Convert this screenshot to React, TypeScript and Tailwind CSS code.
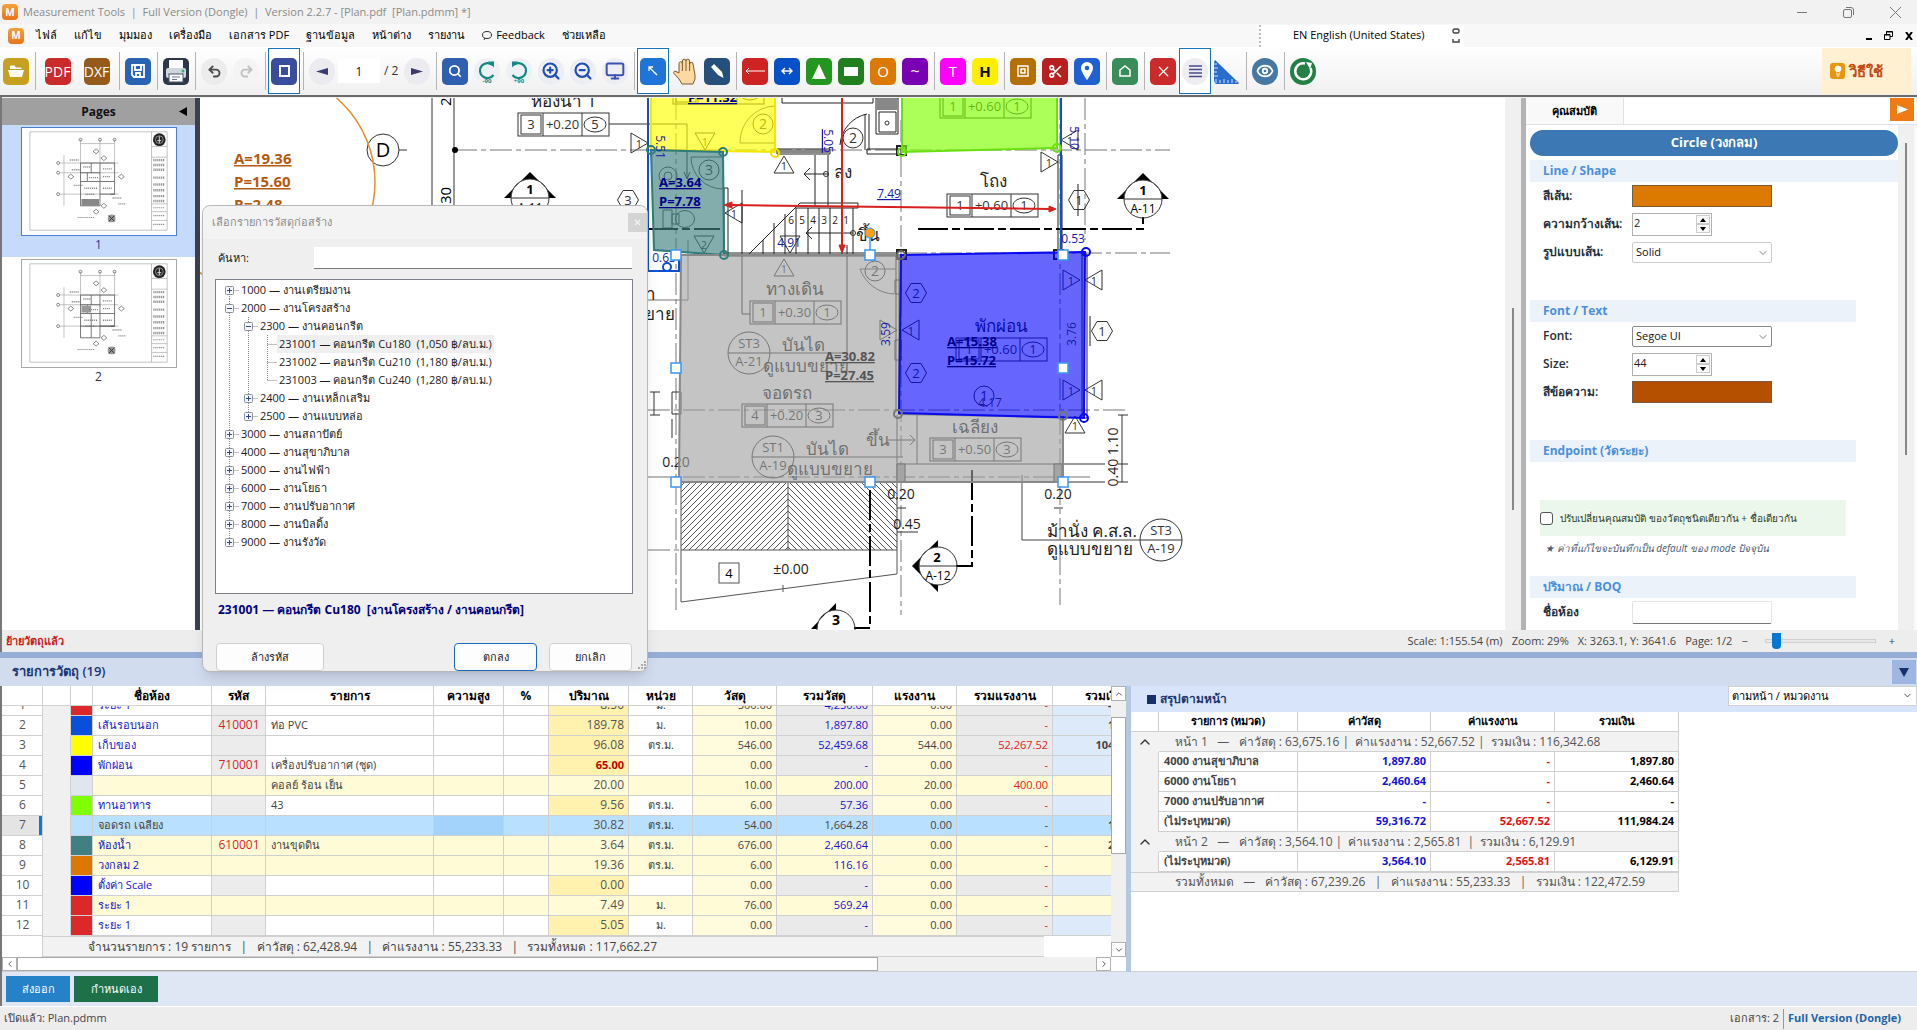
import React from "react";
import {
  Search,
  ZoomIn,
  ZoomOut,
  Monitor,
  Scissors,
  Eye,
  Lightbulb,
  ChevronDown,
  ChevronUp,
  ChevronLeft,
  ChevronRight,
  X,
  Undo2,
  Redo2,
} from "lucide-react";

/* ---------- toolbar ---------- */

function Sep() {
  return (
    <div className="flex w-[6px] shrink-0 justify-center">
      <div className="h-[38px] w-px bg-[#b4b4b4]" />
    </div>
  );
}

function Tool({
  label,
  tile = "",
  round = "",
  active = false,
  wide = false,
  children,
}: {
  label: string;
  tile?: string;
  round?: string;
  active?: boolean;
  wide?: boolean;
  children: React.ReactNode;
}) {
  return (
    <button
      type="button"
      aria-label={label}
      className={
        "flex h-[46px] shrink-0 items-center justify-center " +
        (wide ? "w-[39px] " : "w-8 ") +
        (active ? "border border-[#1a74b8] bg-white" : "")
      }
    >
      <span
        className={
          "flex h-[27px] w-[26px] items-center justify-center overflow-hidden " +
          (round ? "rounded-full " + round : "rounded-[5px] text-white " + tile)
        }
      >
        {children}
      </span>
    </button>
  );
}

function AppLogo() {
  return (
    <span className="flex size-4 items-center justify-center rounded-[4px] bg-gradient-to-b from-[#f6a03c] to-[#e8741a] text-[10px] font-bold text-white">
      M
    </span>
  );
}

function Rotate({ flip, text }: { flip?: boolean; text: string }) {
  return (
    <svg width="26" height="27" viewBox="0 0 26 27">
      <circle cx="13" cy="13" r="13" fill="#eef0f4" />
      <g transform={flip ? "translate(26 0) scale(-1 1)" : undefined} fill="none" stroke="#128a84" strokeWidth="2.2">
        <path d="M18.500 7 A7.500 7.500 0 1 0 19.500 17" />
        <path d="M14 3.500h6v6z" fill="#128a84" stroke="none" />
      </g>
      <text x="13" y="25" fontSize="6" fontWeight="bold" fill="#128a84" textAnchor="middle">
        {text}
      </text>
    </svg>
  );
}

function Toolbar() {
  return (
    <div className="flex h-[50px] shrink-0 items-center border-b-2 border-[#6b6b6b] bg-gradient-to-b from-white to-[#f0f0f0] pr-[6px]">
      <Tool label="Open" tile="bg-[#c8a020]">
        <svg width="16" height="14" viewBox="0 0 16 14" fill="#fff">
          <path d="M2 5V2.5A1 1 0 0 1 3 1.500h3.500l1.500 2h4.500a1 1 0 0 1 1 1V5z" />
          <path d="M0 6h16l-2 7H2z" />
        </svg>
      </Tool>
      <Sep />
      <Tool label="PDF" wide tile="bg-[#c92a2a]">
        <span className="text-[14px]">PDF</span>
      </Tool>
      <Tool label="DXF" wide tile="bg-[#955a1c]">
        <span className="text-[14px]">DXF</span>
      </Tool>
      <Sep />
      <Tool label="Save" tile="bg-[#2a62b4]">
        <svg width="14" height="14" viewBox="0 0 14 14" fill="none" stroke="#fff" strokeWidth="1.800">
          <path d="M1 1h12v12H3l-2-2z" />
          <path d="M4 1v5h6V1M5 13V9h4v4" />
        </svg>
      </Tool>
      <Sep />
      <Tool label="Print" tile="bg-[#2d3748]">
        <svg width="24" height="24" viewBox="0 0 24 24">
          <rect x="5" y="1" width="14" height="9" fill="#fff" />
          <rect x="2" y="9" width="20" height="10" rx="2" fill="#cfd6de" />
          <circle cx="19" cy="12" r="1.500" fill="#38b27a" />
          <rect x="5" y="15" width="14" height="8" fill="#fff" stroke="#4a5568" />
          <path d="M8 18h8M8 20.500h5" stroke="#6b7685" />
        </svg>
      </Tool>
      <Sep />
      <Tool label="Undo" round="bg-[#ececec] text-[#4a4a4a]">
        <Undo2 size={15} strokeWidth={3} />
      </Tool>
      <Tool label="Redo" round="bg-[#f4f4f4] text-[#c0c0c0]">
        <Redo2 size={15} strokeWidth={3} />
      </Tool>
      <Sep />
      <Tool label="Page view" active tile="bg-[#3a4d9c]">
        <span className="h-3 w-[11px] border-2 border-white" />
      </Tool>
      <Sep />
      <Tool label="Previous page" round="bg-[#ebebf0]">
        <svg width="12" height="7" viewBox="0 0 12 7">
          <path d="M0 3.500L12 0v7z" fill="#3b3b70" />
        </svg>
      </Tool>
      <input
        aria-label="Page number"
        defaultValue="1"
        className="h-6 w-[42px] shrink-0 bg-white text-center text-[12px] text-[#222]"
      />
      <span className="w-[21px] shrink-0 pl-1 text-[12px] text-[#333]">/ 2</span>
      <Tool label="Next page" round="bg-[#ebebf0]">
        <svg width="12" height="7" viewBox="0 0 12 7">
          <path d="M12 3.500L0 0v7z" fill="#3b3b70" />
        </svg>
      </Tool>
      <Sep />
      <Tool label="Find" tile="bg-[#2f5fae]">
        <Search size={14} strokeWidth={3} />
      </Tool>
      <Tool label="Rotate left">
        <Rotate text="-90" />
      </Tool>
      <Tool label="Rotate right">
        <Rotate text="+90" flip />
      </Tool>
      <Tool label="Zoom in" round="bg-[#eceef4] text-[#1f4fb4]">
        <ZoomIn size={20} strokeWidth={2.600} />
      </Tool>
      <Tool label="Zoom out" round="bg-[#eceef4] text-[#1f4fb4]">
        <ZoomOut size={20} strokeWidth={2.600} />
      </Tool>
      <Tool label="Fit to screen" round="bg-[#eceef4] text-[#3c50b4]">
        <Monitor size={20} strokeWidth={2.400} />
      </Tool>
      <Sep />
      <Tool label="Select" active tile="bg-[#1f74d8]">
        <svg width="10" height="10" viewBox="0 0 10 10" stroke="#fff" strokeWidth="1.300" fill="none">
          <path d="M1 5V1h4M1 1l8 8" />
        </svg>
      </Tool>
      <Tool label="Pan">
        <svg width="26" height="27" viewBox="0 0 26 27">
          <path
            d="M7 15V5.500a1.700 1.700 0 0 1 3.400 0V3a1.800 1.800 0 0 1 3.600 0v0a1.800 1.800 0 0 1 3.600 0v3a1.700 1.700 0 0 1 3.400 0L23 17v4l-2 5H10l-3-5-5-5.500c-1-1.500.500-3 2-2z"
            fill="#fbd9a0"
            stroke="#7b5a30"
          />
          <path d="M10.400 5v8M14 3v10M17.600 5v8" stroke="#7b5a30" />
        </svg>
      </Tool>
      <Tool label="Pen" tile="bg-[#26507c]">
        <svg width="13" height="14" viewBox="0 0 13 14" fill="#fff">
          <path d="M3 0L0 3l7 8 5.500 3L11 8z" />
        </svg>
      </Tool>
      <Sep />
      <Tool label="Distance" tile="bg-[#cf2222]">
        <svg width="20" height="8" viewBox="0 0 20 8" stroke="#fff" fill="none">
          <path d="M20 4H1M4 1L1 4l3 3" />
        </svg>
      </Tool>
      <Tool label="Dimension" tile="bg-[#0850c8]">
        <svg width="12" height="8" viewBox="0 0 12 8" stroke="#fff" strokeWidth="1.400" fill="none">
          <path d="M1 4h10M4 1L1 4l3 3M8 1l3 3-3 3" />
        </svg>
      </Tool>
      <Tool label="Polygon" tile="bg-[#22961e]">
        <svg width="14" height="15" viewBox="0 0 14 15" fill="#fff">
          <path d="M7 0l7 15H0z" />
        </svg>
      </Tool>
      <Tool label="Rectangle" tile="bg-[#20801e]">
        <span className="h-[9px] w-[14px] bg-white" />
      </Tool>
      <Tool label="Circle" tile="bg-[#dc7a00]">
        <span className="text-[15px]">O</span>
      </Tool>
      <Tool label="Curve" tile="bg-[#7a00b4]">
        <span className="text-[16px]">~</span>
      </Tool>
      <Sep />
      <Tool label="Text" tile="bg-[#ff00ff]">
        <span className="text-[15px]">T</span>
      </Tool>
      <Tool label="Highlight" tile="bg-[#ffee00]">
        <span className="text-[15px] font-bold text-black">H</span>
      </Tool>
      <Sep />
      <Tool label="Offset" tile="bg-[#b47000]">
        <svg width="12" height="12" viewBox="0 0 12 12" fill="none" stroke="#fff" strokeWidth="1.500">
          <path d="M1 1h10v10H1zM4 4h4v4H4z" />
        </svg>
      </Tool>
      <Tool label="Cut" tile="bg-[#b82020]">
        <Scissors size={15} strokeWidth={2.600} />
      </Tool>
      <Tool label="Pin" tile="bg-[#2060d0]">
        <svg width="12" height="18" viewBox="0 0 12 18">
          <path d="M6 0a6 6 0 0 1 6 6c0 4-6 12-6 12S0 10 0 6a6 6 0 0 1 6-6z" fill="#fff" />
          <circle cx="6" cy="6" r="2.300" fill="#2060d0" />
        </svg>
      </Tool>
      <Sep />
      <Tool label="Home" tile="bg-[#3a8c5a]">
        <svg width="12" height="12" viewBox="0 0 12 12" fill="none" stroke="#fff" strokeWidth="1.500">
          <path d="M1 11V5l5-4 5 4v6z" />
        </svg>
      </Tool>
      <Sep />
      <Tool label="Delete" tile="bg-[#cb2a2a]">
        <X size={17} strokeWidth={1.700} />
      </Tool>
      <Tool label="List" active round="bg-[#ededf2]">
        <svg width="13" height="13" viewBox="0 0 13 13" stroke="#4a4a8c" strokeWidth="1.500">
          <path d="M0 1h13M0 4.500h13M0 8h13M0 11.500h13" />
        </svg>
      </Tool>
      <Tool label="Ruler">
        <svg width="26" height="27" viewBox="0 0 26 27">
          <path d="M0 1L26 26H0z" fill="#2a6ccc" />
          <path d="M2 25v-4M6 25v-3M10 25v-4M14 25v-3M18 25v-4M22 25v-2M0 6h3M0 10h4M0 14h3M0 18h4" stroke="#cfe2fa" fill="none" />
        </svg>
      </Tool>
      <Sep />
      <Tool label="Show" round="bg-[#4678a4] text-white">
        <Eye size={18} strokeWidth={2.400} />
      </Tool>
      <Sep />
      <Tool label="Refresh" round="bg-[#258048]">
        <svg width="20" height="20" viewBox="0 0 20 20" fill="none" stroke="#fff" strokeWidth="2.500">
          <path d="M12 2.500A8 8 0 1 0 17.500 7" />
          <path d="M13 1l6 1-2 6z" fill="#fff" stroke="none" />
        </svg>
      </Tool>
      <button
        type="button"
        className="ml-auto flex h-[46px] w-[89px] shrink-0 items-center gap-1 bg-[#fff0d2] pl-2 text-[15px] font-bold text-[#c44a10]"
      >
        <span className="flex h-4 w-[15px] items-center justify-center rounded-[3px] bg-[#e8960c] text-white">
          <Lightbulb size={12} fill="#fff" />
        </span>
        วิธีใช้
      </button>
    </div>
  );
}

/* ---------- page thumbnails ---------- */

function Thumb({ second = false }: { second?: boolean }) {
  return (
    <svg viewBox="0 0 156 110" className="block h-[107px] w-[154px] bg-white">
      <g fill="none" stroke="#999" strokeWidth="0.600">
        <rect x="7" y="4" width="141" height="101" />
        <path d="M132 4v101M132 19h16M132 30h16M132 78h16M132 86h16M132 95h16" />
        <path d="M59 16h35M59 12v24M79 12v24M94 12v24M42 28v52M38 36h60M38 46h60M38 68h60" />
      </g>
      <g fill="none" stroke="#555" strokeWidth="0.800">
        <path d="M59 36H94V68H90M59 36V80H79V55H94M59 46H79M70 36V46M79 36V55M59 55H66V46M79 68H94M66 55H79" />
        {second && <path d="M59 68H94M70 55V80" />}
      </g>
      {second ? <rect x="60" y="47" width="10" height="7" fill="#999" /> : <rect x="60" y="73" width="18" height="7" fill="#888" />}
      <g stroke="#777" strokeWidth="1.500" strokeDasharray="1 1">
        <path d="M48 33h10M50 43h9M52 59h9M62 40h8M82 42h10M68 51h9M82 50h8M63 62h13M82 62h10M92 72h10M98 78h8M64 68h10" />
        <path d="M134 33h12M134 38h12M134 43h12M134 51h12M134 58h12M134 64h12M134 70h12M134 75h12" strokeWidth="2.500" />
        <path d="M56 92h18M134 82h11M134 90h11M134 99h11" strokeWidth="1.200" />
      </g>
      <g fill="none" stroke="#555" strokeWidth="0.700">
        <path d="M72 24l3-2.500 3 2.500-3 2.500zM80 31l3-2.500 3 2.500-3 2.500zM98 50l3-2.500 3 2.500-3 2.500zM46 50l3-2.500 3 2.500-3 2.500zM80 80l3-2.500 3 2.500-3 2.500zM72 86l3-2.500 3 2.500-3 2.500z" />
        <circle cx="59" cy="12" r="1.500" />
        <circle cx="79" cy="12" r="1.500" />
        <circle cx="94" cy="12" r="1.500" />
        <circle cx="36" cy="36" r="1.500" />
        <circle cx="36" cy="46" r="1.500" />
        <circle cx="36" cy="68" r="1.500" />
      </g>
      <circle cx="91" cy="93" r="4" fill="#999" />
      <path d="M88 90l6 6M94 90l-6 6" stroke="#333" />
      <circle cx="140" cy="12" r="6.500" fill="#222" />
      <circle cx="140" cy="12" r="4" fill="none" stroke="#bbb" strokeWidth="0.700" />
      <path d="M140 8.500v7M138 13h4" stroke="#ddd" />
    </svg>
  );
}

function PagesPanel() {
  return (
    <aside className="flex w-[193px] shrink-0 flex-col bg-white text-[12px]">
      <div className="relative flex h-[27px] items-center justify-center bg-[#a0a0a0] font-bold text-[#111]">
        Pages
        <button type="button" aria-label="Collapse" className="absolute right-2">
          <svg width="8" height="9" viewBox="0 0 8 9">
            <path d="M8 0v9L0 4.500z" fill="#000" />
          </svg>
        </button>
      </div>
      <button type="button" className="flex h-[132px] flex-col items-center bg-[#c6dafc] pt-[2px] text-[#1c3ca0]">
        <span className="border border-[#4a7fd0]">
          <Thumb />
        </span>
        1
      </button>
      <button type="button" className="flex h-[132px] flex-col items-center pt-[2px] text-[#333]">
        <span className="border border-[#a8a8a8]">
          <Thumb second />
        </span>
        2
      </button>
    </aside>
  );
}

/* ---------- drawing ---------- */

type P = { x: number; y: number };

function Tag({ x, y, a, v, b }: P & { a: string; v: string; b: string }) {
  return (
    <g fill="none" stroke="#333">
      <rect x={x} y={y} width="91" height="23" />
      <rect x={x + 3} y={y + 2} width="20" height="19" />
      <path d={`M${x + 25} ${y}v23M${x + 64} ${y}v23`} />
      <ellipse cx={x + 77} cy={y + 11.500} rx="11" ry="7.500" />
      <g fill="#333" stroke="none" fontSize="13" textAnchor="middle">
        <text x={x + 13} y={y + 16}>{a}</text>
        <text x={x + 44.500} y={y + 16}>{v}</text>
        <text x={x + 77} y={y + 16}>{b}</text>
      </g>
    </g>
  );
}

function Tri({ x, y, r = 0, n = "1" }: P & { r?: number; n?: string }) {
  return (
    <g>
      <path d="M0 -9L10 8H-10z" transform={`translate(${x} ${y}) rotate(${r})`} fill="none" stroke="#333" />
      {n && <text x={x} y={y + 5} fontSize="11" textAnchor="middle" fill="#333">{n}</text>}
    </g>
  );
}

function Hex({ x, y, n = "1" }: P & { n?: string }) {
  return (
    <g>
      <path d="M-10.500 0L-5 -9.500H5L10.500 0L5 9.500H-5z" transform={`translate(${x} ${y})`} fill="none" stroke="#333" />
      <text x={x} y={y + 5} fontSize="13" textAnchor="middle" fill="#333">{n}</text>
    </g>
  );
}

function Ring({ x, y, n, r = 10 }: P & { n: string; r?: number }) {
  return (
    <g>
      <circle cx={x} cy={y} r={r} fill="none" stroke="#333" />
      <text x={x} y={y + 5} fontSize="14" textAnchor="middle" fill="#333">{n}</text>
    </g>
  );
}

function Stamp({ x, y, a, b }: P & { a: string; b: string }) {
  return (
    <g>
      <circle cx={x} cy={y} r="21" fill="none" stroke="#333" />
      <path d={`M${x - 21} ${y}h42`} stroke="#333" />
      <g fontSize="13" textAnchor="middle" fill="#333">
        <text x={x} y={y - 5}>{a}</text>
        <text x={x} y={y + 13}>{b}</text>
      </g>
    </g>
  );
}

function Marker({ x, y, a, b }: P & { a: string; b: string }) {
  return (
    <g>
      <path d="M-26 0L0 -26L26 0H19A19 19 0 0 0 -19 0z" transform={`translate(${x} ${y})`} fill="#000" />
      <circle cx={x} cy={y} r="19" fill="none" stroke="#333" />
      <path d={`M${x - 19} ${y}h38`} stroke="#333" />
      <g textAnchor="middle">
        <text x={x} y={y - 4} fontSize="13" fontWeight="bold">{a}</text>
        <text x={x} y={y + 14} fontSize="12">{b}</text>
      </g>
    </g>
  );
}

function Label({ x, y, c = "#00008b", s = 15, lines, gap = 19 }: P & { c?: string; s?: number; lines: string[]; gap?: number }) {
  return (
    <g fontSize={s} fontWeight="bold" fill={c} textDecoration="underline">
      {lines.map((t, i) => (
        <text key={t} x={x} y={y + i * gap}>{t}</text>
      ))}
    </g>
  );
}

function Plan() {
  const handles: [number, number][] = [
    [676, 255], [870, 255], [1063, 255], [676, 368], [1063, 368], [676, 482], [870, 482], [1063, 482],
  ];
  const hatch = Array.from({ length: 30 }, (_, i) => i * 6);
  return (
    <svg
      viewBox="200 98 1305 532"
      preserveAspectRatio="xMinYMin slice"
      className="block size-full bg-white font-['Open_Sans','Noto_Sans',sans-serif]"
    >
      <defs>
        <clipPath id="hl"><rect x="681" y="483" width="107" height="67" /></clipPath>
        <clipPath id="hr"><rect x="788" y="483" width="109" height="67" /></clipPath>
      </defs>

      {/* grid axes */}
      <g stroke="#777" strokeDasharray="22 4 5 4" fill="none">
        <path d="M455 150H1170M905 253H1170M648 410H1125M648 477H1090" />
        <path d="M676 98V612M901 120V615M1060 98V605M1085 98V240" />
        <path d="M648 550H681" />
      </g>

      {/* left side of the sheet */}
      <g stroke="#333" fill="none">
        <path d="M432 98V205M454 98V205" />
        <circle cx="383" cy="150" r="16" />
        <path d="M399 150H407" />
        <path d="M609 124H687V178M684 172L687 179L690 172" />
      </g>
      <circle cx="455" cy="150" r="3" />
      <text x="383" y="157" fontSize="20" textAnchor="middle">D</text>
      <text transform="translate(451 208) rotate(-90)" fontSize="15">.30</text>
      <text transform="translate(451 106) rotate(-90)" fontSize="15">2</text>
      <text x="564" y="107" fontSize="17" textAnchor="middle" fill="#222">ห้องน้ำ 1</text>
      <Tag x={518} y={113} a="3" v="+0.20" b="5" />
      <Marker x={530} y={198} a="1" b="A-11" />
      <Hex x={628} y={200} n="3" />
      <circle cx="264" cy="182" r="111" fill="none" stroke="#e09030" strokeWidth="1.500" />
      <Label x={234} y={164} s={15} gap={23} c="#b45a10" lines={["A=19.36", "P=15.60", "R=2.48"]} />

      {/* walls */}
      <g stroke="#222" fill="none">
        <path d="M777 149H830V154H777zM867 149H901V154H867zM724 188H728V254H724zM724 253H897V256H724z" />
        <path d="M1058 155V252H1062V155zM1082 254V418H1087V254z" />
        <path d="M897 146h9v9h-9zM897 250h9v9h-9zM1054 250h9v9h-9z" strokeWidth="2" />
        <path d="M876 98h22v36h-22zM879 112h17v20h-17z" />
        <path d="M865 114V150M869 114V150M867 114A34 34 0 0 0 840 145" />
        <path d="M782 98V103H873V98" />
        <path d="M815 155V207M828 155V207M804 174H828M810 168L804 174L810 180" />
        <path d="M749 254L800 203H858V208H796M806 233H853M812 227L806 233L812 239" />
        <path d="M742 190V314H750M774 223V254M785 214V254M796 208V254M808 208V254M819 208V254M830 208V254M842 208V254M853 208V254M763 240V254" />
        <path d="M847 245V353M1078 184V216M1090 316V346" />
        <path d="M648 300H688V240" stroke="#777" />
        <path d="M896 255V411M899 255V411M895 280h6v14h-6zM895 340h6v20h-6z" />
      </g>
      <g fill="#888">
        <rect x="877" y="98" width="20" height="12" />
        <rect x="777" y="150" width="53" height="3" />
        <rect x="725" y="254" width="130" height="2" />
      </g>
      <circle cx="887" cy="123" r="2" fill="none" stroke="#333" />
      <circle cx="826" cy="174" r="2.500" fill="none" stroke="#333" />
      <circle cx="853" cy="233" r="2.500" fill="none" stroke="#333" />
      <g fontSize="10" textAnchor="middle" fill="#222">
        {["6", "5", "4", "3", "2", "1"].map((n, i) => (
          <text key={n} x={791 + i * 11} y={224}>{n}</text>
        ))}
      </g>

      {/* rooms */}
      <Ring x={763} y={124} n="2" />
      <Ring x={853} y={138} n="2" />
      <Ring x={709} y={170} n="3" />
      <Ring x={875} y={271} n="2" />
      <Ring x={984} y={396} n="1" />
      <path d="M740 143A36 36 0 0 1 775 106V143zM691 157A32 32 0 0 0 723 189M691 157H723M860 269H896M860 269A38 38 0 0 0 894 294" fill="none" stroke="#555" />
      <g fill="none" stroke="#444">
        <circle cx="668" cy="176" r="9" />
        <circle cx="668" cy="176" r="4" />
        <path d="M663 210h9v18h-9zM672 214h7v10h-7z" />
        <ellipse cx="685" cy="219" rx="9.500" ry="8.500" />
      </g>
      <Tri x={705} y={141} r={180} />
      <Tri x={784} y={165} />
      <Tri x={639} y={143} r={90} />
      <Tri x={1049} y={162} r={90} />
      <Tri x={1070} y={140} r={-90} />
      <Tri x={734} y={213} r={-90} />
      <Tri x={704} y={244} r={180} n="2" />
      <Tri x={790} y={244} r={180} n="" />
      <Tri x={784} y={268} />
      <Tri x={888} y={330} r={90} n="" />
      <Tri x={911} y={330} r={-90} />
      <Tri x={1071} y={280} r={90} />
      <Tri x={1094} y={280} r={-90} />
      <Tri x={1071} y={390} r={90} />
      <Tri x={1094} y={390} r={-90} />
      <Tri x={1075} y={425} />
      <Hex x={1079} y={200} />
      <Hex x={1102} y={331} />
      <Hex x={916} y={293} n="2" />
      <Hex x={916} y={373} n="2" />
      <Tag x={940} y={95} a="1" v="+0.60" b="1" />
      <Tag x={673} y={81} a="1" v="+0.60" b="1" />
      <Tag x={947} y={194} a="1" v="+0.60" b="1" />
      <Tag x={750} y={301} a="1" v="+0.30" b="1" />
      <Tag x={956} y={338} a="1" v="+0.60" b="1" />
      <Tag x={742} y={404} a="4" v="+0.20" b="3" />
      <Tag x={930} y={438} a="3" v="+0.50" b="3" />
      <Stamp x={749} y={353} a="ST3" b="A-21" />
      <Stamp x={773} y={457} a="ST1" b="A-19" />
      <Stamp x={1161} y={540} a="ST3" b="A-19" />
      <path d="M770 353H847M794 457H903M897 415V550M917 415V464M897 464H1063M680 482H1063M1022 475V540H1140" fill="none" stroke="#444" />
      <path d="M888 440H914M910 435L915 440L910 445" fill="none" stroke="#444" />
      <path d="M897 464h8v18h-8zM1054 464h8v18h-8z" fill="#aaa" stroke="#333" />
      <g fontSize="17" textAnchor="middle" fill="#222">
        <text x="843" y="178">ลง</text>
        <text x="993" y="187">โถง</text>
        <text x="868" y="241">ขึ้น</text>
        <text x="795" y="295">ทางเดิน</text>
        <text x="803" y="351">บันได</text>
        <text x="806" y="372">ดูแบบขยาย</text>
        <text x="1001" y="332">พักผ่อน</text>
        <text x="787" y="399">จอดรถ</text>
        <text x="827" y="455">บันได</text>
        <text x="830" y="475">ดูแบบขยาย</text>
        <text x="878" y="446">ขึ้น</text>
        <text x="975" y="433">เฉลียง</text>
        <text x="1092" y="537">ม้านั่ง ค.ส.ล.</text>
        <text x="1090" y="555">ดูแบบขยาย</text>
        <text x="646" y="300">ยา</text>
        <text x="654" y="320">ขยาย</text>
      </g>

      {/* driveway */}
      <g stroke="#555" fill="none">
        <g clipPath="url(#hl)">
          {hatch.map((i) => (
            <path key={i} d={`M${684 + i} 483l-67 67`} />
          ))}
        </g>
        <g clipPath="url(#hr)">
          {hatch.map((i) => (
            <path key={i} d={`M${724 + i} 483l67 67`} />
          ))}
        </g>
        <path d="M788 483V550M681 550H897M681 483V602L897 574V550M783 585V592" />
        <rect x="719" y="563" width="20" height="20" />
      </g>
      <text x="729" y="578" fontSize="13" textAnchor="middle">4</text>
      <g fontSize="14" textAnchor="middle" fill="#222">
        <text x="791" y="574">±0.00</text>
        <text x="676" y="467">0.20</text>
        <text x="901" y="499">0.20</text>
        <text x="907" y="529">0.45</text>
        <text x="1058" y="499">0.20</text>
        <text transform="translate(1118 457) rotate(-90)">0.40 1.10</text>
      </g>
      <path
        d="M1122 415V482M1118 415H1128M1118 464H1128M1118 482H1128M1063 464H1105M1063 482H1105M897 508H906M897 532H918M1054 508H1063M654 392V415M650 392H660M650 415H660M672 392h9v22h-9zM672 419V438"
        stroke="#333"
        fill="none"
      />

      {/* section cuts */}
      <g stroke="#000" strokeWidth="2" fill="none">
        <path d="M918 229H1143V217M972 470V566H956M870 490V628H854" strokeDasharray="30 4 8 4" />
        <path d="M648 229H720" strokeDasharray="30 4 8 4" />
      </g>
      <Marker x={1143} y={199} a="1" b="A-11" />
      <g>
        <path d="M912 566L938 540V547A19 19 0 0 0 938 585V592z" />
        <circle cx="938" cy="566" r="19" fill="none" stroke="#333" />
        <path d="M919 566H957" stroke="#333" />
        <text x="937" y="562" fontSize="13" fontWeight="bold" textAnchor="middle">2</text>
        <text x="938" y="580" fontSize="12" textAnchor="middle">A-12</text>
        <path d="M811 629L836 603V610A19 19 0 0 0 817 629z" />
        <circle cx="836" cy="629" r="19" fill="none" stroke="#333" />
        <text x="836" y="625" fontSize="14" fontWeight="bold" textAnchor="middle">3</text>
      </g>

      {/* measured areas */}
      <path d="M651 90V150L775 152V90z" fill="#ffff00" fillOpacity="0.650" stroke="#f5e800" strokeWidth="2" />
      <path d="M902 90V152L1057 148V90z" fill="#7fff00" fillOpacity="0.650" stroke="#6be010" strokeWidth="2" />
      <path d="M651 150L723 152L724 255L654 250z" fill="#408080" fillOpacity="0.650" stroke="#2f7c7c" strokeWidth="2" />
      <path d="M681 255H901L899 414L1063 417V482H679z" fill="#a0a0a0" fillOpacity="0.620" stroke="#888" strokeWidth="2" />
      <path d="M901 255L1085 252L1084 418L899 413z" fill="#0000ff" fillOpacity="0.600" stroke="#0a0af0" strokeWidth="2" />
      <path d="M648 98V271H679V255M1061 98V252" fill="none" stroke="#0a50d0" strokeWidth="2" />
      <g fill="none" strokeWidth="2">
        <circle cx="775" cy="153" r="4" stroke="#f0e000" />
        <circle cx="902" cy="152" r="4" stroke="#6be010" />
        <circle cx="1057" cy="148" r="4" stroke="#6be010" />
        <circle cx="651" cy="150" r="4" stroke="#2f7c7c" />
        <circle cx="723" cy="152" r="4" stroke="#2f7c7c" />
        <circle cx="724" cy="255" r="4" stroke="#2f7c7c" />
        <circle cx="901" cy="255" r="4" stroke="#666" />
        <circle cx="898" cy="414" r="4" stroke="#777" />
        <circle cx="1063" cy="416" r="4" stroke="#777" />
        <circle cx="1086" cy="252" r="4" stroke="#0a0af0" />
        <circle cx="1084" cy="418" r="4" stroke="#0a0af0" />
        <circle cx="667" cy="267" r="4" stroke="#0a50d0" />
      </g>
      <g stroke="#d82020" strokeWidth="2" fill="#d82020">
        <path d="M842 98V246M732 205L1049 209" />
        <path d="M839 245h6l-3 8zM732 202v6l-8-3zM1049 206v6l7-3z" strokeWidth="1" />
      </g>
      <Label x={688} y={102} lines={["P=11.32"]} s={13} />
      <Label x={659} y={187} lines={["A=3.64", "P=7.78"]} s={13} />
      <Label x={825} y={361} lines={["A=30.82", "P=27.45"]} s={13} c="#555" />
      <Label x={947} y={346} lines={["A=15.38", "P=15.72"]} s={13} />
      <g fontSize="12" fill="#1a1aa8" textAnchor="middle">
        <text x="889" y="198" textDecoration="underline">7.49</text>
        <text x="789" y="247">4.91</text>
        <text x="1073" y="243">0.53</text>
        <text x="990" y="407">4.17</text>
        <text x="664" y="262">0.63</text>
        <text transform="translate(824 141) rotate(90)" textDecoration="underline">5.05</text>
        <text transform="translate(656 147) rotate(90)">5.51</text>
        <text transform="translate(1070 138) rotate(90)">5.10</text>
        <text transform="translate(890 334) rotate(-90)">3.59</text>
        <text transform="translate(1076 334) rotate(-90)">3.76</text>
      </g>
      <path d="M870 238V250" stroke="#4a9ae8" strokeWidth="1.500" />
      <circle cx="870" cy="233" r="5" fill="#ffa010" stroke="#4a9ae8" />
      {handles.map(([x, y]) => (
        <rect key={`${x}-${y}`} x={x - 5} y={y - 5} width="10" height="10" fill="#fff" stroke="#3c96f0" strokeWidth="1.500" />
      ))}
    </svg>
  );
}

/* ---------- property panel ---------- */

function Section({ children, full = false }: { children: React.ReactNode; full?: boolean }) {
  return (
    <h3
      className={
        "flex h-[22px] items-center bg-[#ecf2fa] pl-[13px] text-[12px] font-bold text-[#4a90dc] " +
        (full ? "" : "mr-[42px]")
      }
    >
      {children}
    </h3>
  );
}

function Field({ id, label, children }: { id: string; label: string; children: React.ReactNode }) {
  return (
    <div className="flex h-7 items-center pl-[13px]">
      <label htmlFor={id} className="w-[89px] shrink-0 whitespace-nowrap text-[12px] font-semibold text-[#26303c]">
        {label}
      </label>
      {children}
    </div>
  );
}

function Spin({ id, value }: { id: string; value: string }) {
  return (
    <div className="flex h-[23px] w-20 items-center border border-[#b0b0b0] bg-white pr-px">
      <input id={id} defaultValue={value} className="h-full min-w-0 flex-1 pb-1 pl-px text-[11px] text-[#222]" />
      <div className="flex flex-col">
        <button type="button" aria-label="Increase" className="flex h-[9px] w-[14px] items-center justify-center border border-[#ccc] bg-[#fafafa]">
          <svg width="6" height="4" viewBox="0 0 6 4"><path d="M3 0l3 4H0z" /></svg>
        </button>
        <button type="button" aria-label="Decrease" className="flex h-[9px] w-[14px] items-center justify-center border border-[#ccc] bg-[#fafafa]">
          <svg width="6" height="4" viewBox="0 0 6 4"><path d="M3 4l3-4H0z" /></svg>
        </button>
      </div>
    </div>
  );
}

function Drop({ id, value, dark = false }: { id: string; value: string; dark?: boolean }) {
  return (
    <div className="relative">
      <select
        id={id}
        className={
          "block h-[21px] w-[140px] appearance-none rounded-[2px] border bg-white pl-[3px] text-[11px] text-[#111] " +
          (dark ? "border-[#888]" : "border-[#ccc]")
        }
      >
        <option>{value}</option>
      </select>
      <ChevronDown size={12} strokeWidth={1.500} className="pointer-events-none absolute right-[3px] top-[5px] text-[#555]" />
    </div>
  );
}

function Properties() {
  return (
    <aside className="flex w-[391px] shrink-0 flex-col overflow-hidden bg-white">
      <div className="flex h-[27px] shrink-0 items-stretch border-b border-[#e2e2e2]">
        <button type="button" className="w-[98px] border-r border-[#e2e2e2] bg-[#f9f9f9] text-[11px] font-semibold text-black">
          คุณสมบัติ
        </button>
        <button type="button" aria-label="Hide panel" className="ml-auto mr-[3px] flex h-[23px] w-6 items-center justify-center bg-[#f07a14]">
          <svg width="11" height="9" viewBox="0 0 11 9"><path d="M0 0l11 4.500L0 9z" fill="#fff" /></svg>
        </button>
      </div>
      <div className="flex min-h-0 flex-1">
        <div className="min-w-0 flex-1 overflow-hidden pl-1 pt-[5px]">
          <div className="flex h-[26px] items-center justify-center rounded-full bg-[#3c78b4] text-[13px] font-bold text-white">
            Circle (วงกลม)
          </div>
          <div className="mt-1 h-[140px]">
            <Section full>Line / Shape</Section>
            <Field id="lc" label="สีเส้น:">
              <button id="lc" type="button" className="h-[22px] w-[140px] border border-[#7a5a34] bg-[#dc7a00]" />
            </Field>
            <Field id="lw" label="ความกว้างเส้น:">
              <Spin id="lw" value="2" />
            </Field>
            <Field id="ls" label="รูปแบบเส้น:">
              <Drop id="ls" value="Solid" />
            </Field>
          </div>
          <div className="h-[140px]">
            <Section>Font / Text</Section>
            <Field id="ff" label="Font:">
              <Drop id="ff" value="Segoe UI" dark />
            </Field>
            <Field id="fs" label="Size:">
              <Spin id="fs" value="44" />
            </Field>
            <Field id="fc" label="สีข้อความ:">
              <button id="fc" type="button" className="h-[22px] w-[140px] border border-[#7a5a44] bg-[#b45000]" />
            </Field>
          </div>
          <div className="h-[136px]">
            <Section>Endpoint (วัดระยะ)</Section>
            <label className="ml-[10px] mr-[52px] mt-[38px] flex h-9 items-center gap-[7px] whitespace-nowrap bg-[#eaf7ea] text-[10px] text-[#2c3c2c]">
              <input type="checkbox" className="size-[13px] shrink-0 appearance-none rounded-[3px] border border-[#555] bg-white" />
              ปรับเปลี่ยนคุณสมบัติ ของวัตถุชนิดเดียวกัน + ชื่อเดียวกัน
            </label>
            <p className="whitespace-nowrap pl-[15px] text-[10px] italic leading-6 text-[#4a5a70]">
              ★ ค่าที่แก้ไขจะบันทึกเป็น default ของ mode ปัจจุบัน
            </p>
          </div>
          <Section>ปริมาณ / BOQ</Section>
          <Field id="room" label="ชื่อห้อง">
            <input id="room" className="h-[23px] w-[140px] rounded-[2px] border border-b-[#777] border-[#e4e4e4]" />
          </Field>
        </div>
        <div className="flex w-4 shrink-0 justify-center bg-[#f0f0f0] pt-[18px]">
          <div className="h-[312px] w-[2px] bg-[#888]" />
        </div>
        <div className="w-[3px] shrink-0 bg-[#fafafa]" />
      </div>
    </aside>
  );
}

/* ---------- material dialog ---------- */

type Node = { lvl: number; text: string; box?: "+" | "-"; sel?: boolean };

const tree: Node[] = [
  { lvl: 0, text: "1000 — งานเตรียมงาน", box: "+" },
  { lvl: 0, text: "2000 — งานโครงสร้าง", box: "-" },
  { lvl: 1, text: "2300 — งานคอนกรีต", box: "-" },
  { lvl: 2, text: "231001 — คอนกรีต Cu180  (1,050 ฿/ลบ.ม.)", sel: true },
  { lvl: 2, text: "231002 — คอนกรีต Cu210  (1,180 ฿/ลบ.ม.)" },
  { lvl: 2, text: "231003 — คอนกรีต Cu240  (1,280 ฿/ลบ.ม.)" },
  { lvl: 1, text: "2400 — งานเหล็กเสริม", box: "+" },
  { lvl: 1, text: "2500 — งานแบบหล่อ", box: "+" },
  { lvl: 0, text: "3000 — งานสถาปัตย์", box: "+" },
  { lvl: 0, text: "4000 — งานสุขาภิบาล", box: "+" },
  { lvl: 0, text: "5000 — งานไฟฟ้า", box: "+" },
  { lvl: 0, text: "6000 — งานโยธา", box: "+" },
  { lvl: 0, text: "7000 — งานปรับอากาศ", box: "+" },
  { lvl: 0, text: "8000 — งานบิลดิ้ง", box: "+" },
  { lvl: 0, text: "9000 — งานรังวัด", box: "+" },
];

function TreeRow({ n, first, end }: { n: Node; first: boolean; end: boolean }) {
  return (
    <li className="flex h-[18px] items-center">
      {Array.from({ length: n.lvl + 1 }, (_, i) => {
        const last = i === n.lvl;
        const from = first ? 9 : 0;
        const to = last && end ? 9 : 18;
        return (
          <svg key={i} width="19" height="18" viewBox="0 0 19 18" className="shrink-0" fill="none">
            {(last || i < 1 || n.lvl === 2) && <path d={`M9.500 ${from}V${to}`} stroke="#888" strokeDasharray="1 1" />}
            {last && <path d="M9.500 9.500H19" stroke="#888" strokeDasharray="1 1" />}
            {last && n.box && (
              <>
                <rect x="5.500" y="5.500" width="8" height="8" rx="1" fill="#f4f6fa" stroke="#8a8f9a" />
                <path d={n.box === "+" ? "M7 9.500h5M9.500 7v5" : "M7 9.500h5"} stroke="#2c4a8c" />
              </>
            )}
          </svg>
        );
      })}
      <span className={"whitespace-pre px-[2px] leading-[18px] " + (n.sel ? "bg-[#efefef]" : "")}>{n.text}</span>
    </li>
  );
}

function Dialog() {
  return (
    <section
      role="dialog"
      aria-label="เลือกรายการวัสดุก่อสร้าง"
      className="absolute left-[202px] top-[205px] z-10 flex w-[446px] flex-col rounded-lg border border-[#b8b8b8] bg-[#efefef] text-[11px] text-[#1a1a1a] shadow-lg"
    >
      <header className="flex h-[33px] items-center justify-between rounded-t-lg bg-[#f3f3f3] pl-[9px] text-[#8c8c8c]">
        <span>เลือกรายการวัสดุก่อสร้าง</span>
        <button type="button" aria-label="Close" className="flex h-[19px] w-[19px] items-center justify-center bg-[#d4d4d4] text-[#f4f4f4]">
          <X size={9} strokeWidth={3} />
        </button>
      </header>
      <div className="flex items-center pb-[10px] pl-[15px] pr-[15px] pt-2">
        <label htmlFor="q" className="w-24 shrink-0">ค้นหา:</label>
        <input id="q" className="h-[22px] min-w-0 flex-1 border-b border-[#777] bg-white" />
      </div>
      <ul className="ml-3 mr-[14px] h-[315px] border border-[#7c8088] bg-white pl-1 pt-px">
        {tree.map((n, i) => (
          <TreeRow key={n.text} n={n} first={i === 0} end={i === 5 || i === 7 || i === tree.length - 1} />
        ))}
      </ul>
      <p className="h-[49px] whitespace-pre pl-[15px] pt-[7px] text-[12px] font-bold text-[#00007c]">
        231001 — คอนกรีต Cu180  [งานโครงสร้าง / งานคอนกรีต]
      </p>
      <div className="flex h-7 gap-3 pl-[13px] pr-[15px]">
        <button type="button" className="w-[108px] rounded-[4px] border border-[#d0d0d0] bg-[#fdfdfd]">ล้างรหัส</button>
        <button type="button" className="ml-auto w-[83px] rounded-[4px] border border-[#1a6cb8] bg-[#fdfdfd]">ตกลง</button>
        <button type="button" className="w-[83px] rounded-[4px] border border-[#d0d0d0] bg-[#fdfdfd]">ยกเลิก</button>
      </div>
      <svg width="10" height="10" viewBox="0 0 10 10" className="absolute bottom-0 right-0" fill="#aaa">
        <path d="M7 0h2v2H7zM7 3h2v2H7zM7 6h2v2H7zM4 3h2v2H4zM4 6h2v2H4zM1 6h2v2H1z" />
      </svg>
    </section>
  );
}

/* ---------- object table ---------- */

type Row = {
  n: string; c: string; name: string; code?: string; item?: string; qty: string; unit?: string;
  mat: string; tmat: string; lab: string; tlab: string; sum?: string; y?: boolean; sel?: boolean; noteQty?: boolean;
};

const rows: Row[] = [
  { n: "1", c: "bg-[#dc2828]", name: "ระยะ 1", qty: "8.50", unit: "ม.", mat: "500.00", tmat: "4,250.00", lab: "0.00", tlab: "-", sum: "4,250.00" },
  { n: "2", c: "bg-[#0850dc]", name: "เส้นรอบนอก", code: "410001", item: "ท่อ PVC", qty: "189.78", unit: "ม.", mat: "10.00", tmat: "1,897.80", lab: "0.00", tlab: "-", sum: "1,897.80" },
  { n: "3", c: "bg-[#ffff00]", name: "เก็บของ", qty: "96.08", unit: "ตร.ม.", mat: "546.00", tmat: "52,459.68", lab: "544.00", tlab: "52,267.52", sum: "104,727.20" },
  { n: "4", c: "bg-[#0000ff]", name: "พักผ่อน", code: "710001", item: "เครื่องปรับอากาศ (ชุด)", qty: "65.00", noteQty: true, mat: "0.00", tmat: "-", lab: "0.00", tlab: "-" },
  { n: "5", c: "bg-[#e0e6ee]", name: "", item: "คอลย์ ร้อน เย็น", qty: "20.00", mat: "10.00", tmat: "200.00", lab: "20.00", tlab: "400.00", y: true },
  { n: "6", c: "bg-[#80ff00]", name: "ทานอาหาร", item: "43", qty: "9.56", unit: "ตร.ม.", mat: "6.00", tmat: "57.36", lab: "0.00", tlab: "-" },
  { n: "7", c: "bg-[#b9e0ff]", name: "จอดรถ เฉลียง", qty: "30.82", unit: "ตร.ม.", mat: "54.00", tmat: "1,664.28", lab: "0.00", tlab: "-", sum: "1,664.28", sel: true },
  { n: "8", c: "bg-[#408080]", name: "ห้องน้ำ", code: "610001", item: "งานขุดดิน", qty: "3.64", unit: "ตร.ม.", mat: "676.00", tmat: "2,460.64", lab: "0.00", tlab: "-", sum: "2,460.64", y: true },
  { n: "9", c: "bg-[#dc7800]", name: "วงกลม 2", qty: "19.36", unit: "ตร.ม.", mat: "6.00", tmat: "116.16", lab: "0.00", tlab: "-", y: true },
  { n: "10", c: "bg-[#0000ff]", name: "ตั้งค่า Scale", qty: "0.00", mat: "0.00", tmat: "-", lab: "0.00", tlab: "-" },
  { n: "11", c: "bg-[#dc2828]", name: "ระยะ 1", qty: "7.49", unit: "ม.", mat: "76.00", tmat: "569.24", lab: "0.00", tlab: "-", y: true },
  { n: "12", c: "bg-[#dc2828]", name: "ระยะ 1", qty: "5.05", unit: "ม.", mat: "0.00", tmat: "-", lab: "0.00", tlab: "-" },
];

function ItemRow({ r, cut }: { r: Row; cut?: boolean }) {
  const bg = (plain: string) => (r.sel ? "bg-[#b9e0ff] " : r.y ? "bg-[#fffbd6] " : plain + " ");
  const cell = (key: string, cls: string, text?: string) => (
    <td key={key} className={"overflow-hidden whitespace-nowrap border-b border-r border-[#d0d0d0] p-0 " + cls}>
      <div className={"flex flex-col justify-end overflow-hidden pl-[5px] pr-1 " + (cut ? "h-[9px]" : "h-[19px]")}>
        <span className="h-[19px] shrink-0 leading-[18px]">{text}</span>
      </div>
    </td>
  );
  return (
    <tr>
      {cell("n", "text-center text-[12px] text-[#555] " + (r.sel ? "bg-[#e4e4e4] shadow-[inset_-3px_0_0_#0f78d0]" : "bg-white"), r.n)}
      {cell("g", "border-b-[#f0f0f0] bg-[#f0f0f0]")}
      {cell("c", r.c)}
      {cell("name", bg("bg-white") + (r.sel ? "text-[#444]" : "text-[#1414c8]"), r.name)}
      {cell("code", bg("bg-[#ececec]") + "text-center text-[12px] text-[#d81e1e]", r.code)}
      {cell("item", bg("bg-white") + "text-[#444]", r.item)}
      {cell("h", r.sel ? "bg-[#a3d3fb]" : bg("bg-white"))}
      {cell("p", bg("bg-white"))}
      {cell("qty", bg("bg-[#fff2ae]") + (r.noteQty ? "text-right text-[11px] font-bold text-[#c00000]" : "text-right text-[12px] text-[#555]"), r.qty)}
      {cell("u", bg("bg-white") + "text-center text-[#444]", r.unit)}
      {cell("mat", bg("bg-[#fffbdc]") + "text-right text-[#444]", r.mat)}
      {cell("tm", bg("bg-[#eaeaea]") + "text-right " + (r.sel ? "text-[#444]" : "text-[#1414c8]"), r.tmat)}
      {cell("lab", bg("bg-[#fffbdc]") + "text-right text-[#444]", r.lab)}
      {cell("tl", bg("bg-[#eaeaea]") + "text-right " + (r.sel ? "text-[#444]" : "text-[#e01e1e]"), r.tlab)}
      {cell("s", bg("bg-[#dceafa]") + "text-right font-bold text-[#444]", r.sum)}
    </tr>
  );
}

const heads = ["", "", "", "ชื่อห้อง", "รหัส", "รายการ", "ความสูง", "%", "ปริมาณ", "หน่วย", "วัสดุ", "รวมวัสดุ", "แรงงาน", "รวมแรงงาน", "รวมเงิน"];
const headWidths = [
  "w-[41px]", "w-[28px]", "w-[22px]", "w-[119px]", "w-[54px]", "w-[168px]", "w-[70px]", "w-[45px]",
  "w-[80px]", "w-[64px]", "w-[84px]", "w-[96px]", "w-[84px]", "w-[96px]", "w-[104px]",
];

function ObjectGrid() {
  return (
    <div className="flex min-w-0 flex-[1124] flex-col border-b border-[#d0d0d0] bg-white">
      <div className="flex">
        <div className="min-w-0 flex-1 overflow-hidden">
          <table className="w-[1155px] table-fixed border-separate border-spacing-0 text-[11px]">
            <thead>
              <tr>
                {heads.map((h, i) => (
                  <th key={i} className={"h-5 whitespace-nowrap border-b border-r border-[#d0d0d0] bg-white p-0 text-[12px] font-bold leading-4 text-black " + headWidths[i]}>
                    {h}
                  </th>
                ))}
              </tr>
            </thead>
            <tbody>
              {rows.map((r, i) => (
                <ItemRow key={r.n} r={r} cut={i === 0} />
              ))}
            </tbody>
          </table>
          <div className="flex h-[21px] items-stretch text-[12px] text-[#444]">
            <div className="w-[41px] shrink-0 border-r border-[#d0d0d0]" />
            <div className="mr-[67px] flex flex-1 items-center whitespace-pre border-b border-t border-[#d0d0d0] bg-[#f2f2f2] pl-[45px]">
              จำนวนรายการ : 19 รายการ   |   ค่าวัสดุ : 62,428.94   |   ค่าแรงงาน : 55,233.33   |   รวมทั้งหมด : 117,662.27
            </div>
          </div>
        </div>
        <div className="flex w-[15px] shrink-0 flex-col bg-[#f0f0f0]">
          <button type="button" aria-label="Scroll up" className="flex h-[15px] items-center justify-center border border-[#b0b0b0] bg-white">
            <ChevronUp size={10} strokeWidth={1.500} />
          </button>
          <div className="mt-4 h-[137px] border border-[#a8a8a8] bg-white" />
          <button type="button" aria-label="Scroll down" className="mt-auto flex h-[15px] items-center justify-center border border-[#b0b0b0] bg-white">
            <ChevronDown size={10} strokeWidth={1.500} />
          </button>
        </div>
      </div>
      <div className="mr-[15px] flex h-[14px] bg-[#f0f0f0]">
        <button type="button" aria-label="Scroll left" className="flex w-[15px] items-center justify-center border border-[#b0b0b0] bg-white">
          <ChevronLeft size={10} strokeWidth={1.500} />
        </button>
        <div className="w-[861px] border border-[#a8a8a8] bg-white" />
        <button type="button" aria-label="Scroll right" className="ml-auto flex w-[15px] items-center justify-center border border-[#b0b0b0] bg-white">
          <ChevronRight size={10} strokeWidth={1.500} />
        </button>
      </div>
    </div>
  );
}

/* ---------- summary table ---------- */

function SumRow({ a, b, c, d }: { a: string; b: string; c: string; d: string }) {
  const td = "h-5 whitespace-nowrap border-b border-r border-[#d0d0d0] bg-white px-1 py-0 text-right";
  return (
    <tr className="font-bold">
      <td className="border-r border-[#d0d0d0] bg-[#f2f2f2]" />
      <td className="h-5 whitespace-nowrap border-b border-r border-[#d0d0d0] bg-white px-[5px] py-0 text-[#444]">{a}</td>
      <td className={td + " text-[#1414d8]"}>{b}</td>
      <td className={td + " text-[#dc1414]"}>{c}</td>
      <td className={td + " text-black"}>{d}</td>
    </tr>
  );
}

function GroupRow({ text, icon = true }: { text: string; icon?: boolean }) {
  return (
    <tr>
      <td className={"h-5 bg-[#f2f2f2] p-0 " + (icon ? "" : "border-b border-t border-[#d0d0d0]")}>
        {icon && <ChevronUp size={16} strokeWidth={2} className="mx-auto text-[#333]" />}
      </td>
      <td
        colSpan={4}
        className={
          "h-5 whitespace-pre border-b border-r border-[#d0d0d0] bg-[#f2f2f2] py-0 pl-4 pr-0 text-[12px] text-[#555] " +
          (icon ? "" : "border-t")
        }
      >
        {text}
      </td>
    </tr>
  );
}

function Summary() {
  const th = "h-5 border-b border-r border-[#d0d0d0] p-0 font-bold text-black ";
  return (
    <div className="flex min-w-0 flex-[786] flex-col border-b border-[#d0d0d0] bg-white">
      <div className="flex h-[26px] shrink-0 items-center justify-between bg-[#d8e4fa] pl-4">
        <h3 className="flex items-center gap-1 text-[12px] font-semibold text-[#1c3570]">
          <span className="size-[9px] bg-[#17306a]" />
          สรุปตามหน้า
        </h3>
        <div className="relative mb-[6px]">
          <select aria-label="จัดกลุ่ม" className="block h-5 w-[189px] appearance-none border border-[#d0d0d0] bg-white pl-[3px] text-[11px] text-black">
            <option>ตามหน้า / หมวดงาน</option>
          </select>
          <ChevronDown size={11} strokeWidth={1.500} className="pointer-events-none absolute right-1 top-1" />
        </div>
      </div>
      <table className="w-[548px] table-fixed border-separate border-spacing-0 text-[11px]">
        <thead>
          <tr>
            <th className={th + "w-7"} />
            <th className={th + "w-[139px]"}>รายการ (หมวด)</th>
            <th className={th + "w-[133px]"}>ค่าวัสดุ</th>
            <th className={th + "w-[124px]"}>ค่าแรงงาน</th>
            <th className={th + "w-[124px]"}>รวมเงิน</th>
          </tr>
        </thead>
        <tbody>
          <GroupRow text="หน้า 1   —   ค่าวัสดุ : 63,675.16 |  ค่าแรงงาน : 52,667.52 |  รวมเงิน : 116,342.68" />
          <SumRow a="4000 งานสุขาภิบาล" b="1,897.80" c="-" d="1,897.80" />
          <SumRow a="6000 งานโยธา" b="2,460.64" c="-" d="2,460.64" />
          <SumRow a="7000 งานปรับอากาศ" b="-" c="-" d="-" />
          <SumRow a="(ไม่ระบุหมวด)" b="59,316.72" c="52,667.52" d="111,984.24" />
          <GroupRow text="หน้า 2   —   ค่าวัสดุ : 3,564.10 |  ค่าแรงงาน : 2,565.81  |  รวมเงิน : 6,129.91" />
          <SumRow a="(ไม่ระบุหมวด)" b="3,564.10" c="2,565.81" d="6,129.91" />
          <GroupRow icon={false} text="รวมทั้งหมด   —   ค่าวัสดุ : 67,239.26   |   ค่าแรงงาน : 55,233.33   |   รวมเงิน : 122,472.59" />
        </tbody>
      </table>
    </div>
  );
}

/* ---------- page ---------- */

const menus = ["ไฟล์", "แก้ไข", "มุมมอง", "เครื่องมือ", "เอกสาร PDF", "ฐานข้อมูล", "หน้าต่าง", "รายงาน", "Feedback", "ช่วยเหลือ"];

export default function App() {
  return (
    <div className="relative flex h-screen flex-col overflow-hidden bg-[#f0f0f0] font-['Open_Sans','Noto_Sans',sans-serif] text-[11px] leading-normal">
      <header className="flex h-6 shrink-0 items-center gap-[5px] bg-[#f2f2f2] pl-[2px] text-[#8a8a8a]">
        <AppLogo />
        <h1 className="whitespace-pre">Measurement Tools  |  Full Version (Dongle)  |  Version 2.2.7 - [Plan.pdf  [Plan.pdmm] *]</h1>
        <div className="ml-auto flex items-center gap-9 pr-4">
          <button type="button" aria-label="Minimize" className="h-px w-[10px] bg-[#777]" />
          <button type="button" aria-label="Restore">
            <svg width="11" height="11" viewBox="0 0 11 11" fill="none" stroke="#777">
              <rect x="0.500" y="2.500" width="8" height="8" rx="1.500" />
              <path d="M3 0.500h5a2.500 2.500 0 0 1 2.500 2.500v5" />
            </svg>
          </button>
          <button type="button" aria-label="Close">
            <svg width="11" height="11" viewBox="0 0 11 11" stroke="#777"><path d="M0 0l11 11M11 0L0 11" /></svg>
          </button>
        </div>
      </header>

      <nav className="flex h-[23px] shrink-0 items-center bg-[#f8f8f8] pl-2 text-black">
        <AppLogo />
        <div className="flex gap-[17px] whitespace-nowrap pl-3">
          {menus.map((m) => (
            <button key={m} type="button" className="flex items-center gap-1">
              {m === "Feedback" && (
                <svg width="10" height="9" viewBox="0 0 10 9" fill="none" stroke="#333">
                  <ellipse cx="5" cy="4" rx="4.500" ry="3.500" />
                  <path d="M3 7L2 9" />
                </svg>
              )}
              {m}
            </button>
          ))}
        </div>
        <div className="ml-auto mr-[402px] flex h-[22px] w-[205px] items-center border-l-2 border-dotted border-[#bbb] bg-white pl-8">
          <span className="whitespace-nowrap">EN English (United States)</span>
          <svg width="8" height="16" viewBox="0 0 8 16" className="ml-auto mr-1" fill="none" stroke="#444" strokeWidth="1.400">
            <rect x="1" y="1" width="6" height="4" rx="1.500" />
            <path d="M1 11v3h6v-3" />
          </svg>
        </div>
        <div className="flex items-end gap-3 pr-1">
          <button type="button" aria-label="Minimize document" className="h-[2px] w-[6px] bg-black" />
          <button type="button" aria-label="Restore document">
            <svg width="9" height="9" viewBox="0 0 9 9" fill="none" stroke="#000">
              <path d="M2.500 3V.500h6v5H6M2.500 1h6" />
              <path d="M.500 3.500h5.500v5H.500zM.500 4h5.500" />
            </svg>
          </button>
          <button type="button" aria-label="Close document">
            <svg width="8" height="8" viewBox="0 0 8 8" stroke="#000" strokeWidth="2"><path d="M1 0l6 8M7 0L1 8" /></svg>
          </button>
        </div>
      </nav>

      <Toolbar />

      <main className="flex min-h-0 flex-1 border-l-2 border-[#777] pt-px">
        <PagesPanel />
        <div className="w-[5px] shrink-0 bg-[#3a4050]" />
        <div className="min-w-0 flex-1 overflow-hidden">
          <Plan />
        </div>
        <div className="flex w-4 shrink-0 justify-center bg-[#f0f0f0] pt-[210px]">
          <div className="h-[202px] w-[2px] bg-[#888]" />
        </div>
        <div className="w-[5px] shrink-0 bg-[#b3b3b6]" />
        <Properties />
      </main>

      <div className="flex h-[22px] shrink-0 items-center border-l-2 border-[#777] bg-[#ededed] pl-1 text-[#444]">
        <span className="font-semibold text-[#c81e1e]">ย้ายวัตถุแล้ว</span>
        <div className="ml-auto flex items-center gap-[9px] whitespace-nowrap pr-[22px]">
          <span>Scale: 1:155.54 (m)</span>
          <span>Zoom: 29%</span>
          <span>X: 3263.1, Y: 3641.6</span>
          <span>Page: 1/2</span>
          <button type="button" aria-label="Zoom out" className="mr-2">−</button>
          <input
            type="range"
            aria-label="Zoom"
            defaultValue="6"
            className="h-4 w-[111px] appearance-none bg-transparent [&::-webkit-slider-runnable-track]:h-1 [&::-webkit-slider-runnable-track]:border [&::-webkit-slider-runnable-track]:border-[#d0d0d0] [&::-webkit-slider-runnable-track]:bg-[#e8e8e8] [&::-webkit-slider-thumb]:-mt-[7px] [&::-webkit-slider-thumb]:h-4 [&::-webkit-slider-thumb]:w-[9px] [&::-webkit-slider-thumb]:appearance-none [&::-webkit-slider-thumb]:rounded-b-[4px] [&::-webkit-slider-thumb]:bg-[#0078d4]"
          />
          <button type="button" aria-label="Zoom in" className="ml-1">+</button>
        </div>
      </div>

      <div className="h-[6px] shrink-0 bg-[#96aed6]" />
      <div className="flex h-7 shrink-0 items-center justify-between bg-[#d1dcef] pl-3 pr-px">
        <h2 className="text-[13px] font-semibold text-[#1c3570]">รายการวัตถุ (19)</h2>
        <button type="button" aria-label="Collapse list" className="flex size-6 items-center justify-center bg-[#9db6e2]">
          <svg width="10" height="9" viewBox="0 0 10 9"><path d="M0 0h10L5 9z" fill="#14306c" /></svg>
        </button>
      </div>

      <div className="flex shrink-0 border-l-2 border-[#777]">
        <ObjectGrid />
        <div className="w-[5px] shrink-0 bg-[#b4c8e4]" />
        <Summary />
      </div>

      <div className="flex h-[34px] shrink-0 items-center gap-1 border-l-2 border-[#777] bg-[#dfe7f4] pl-1 text-white">
        <button type="button" className="h-[26px] w-16 bg-[#2682c8]">ส่งออก</button>
        <button type="button" className="h-[26px] w-[84px] bg-[#1e7048]">กำหนดเอง</button>
      </div>

      <footer className="flex h-6 shrink-0 items-center justify-between border-t border-white bg-[#ededed] pl-1 pr-4 text-[#444]">
        <span>เปิดแล้ว: Plan.pdmm</span>
        <div className="flex items-center gap-1">
          <span>เอกสาร: 2</span>
          <span className="h-5 w-px bg-[#999]" />
          <span className="font-bold text-[#1a64a8]">Full Version (Dongle)</span>
        </div>
      </footer>

      <Dialog />
    </div>
  );
}
